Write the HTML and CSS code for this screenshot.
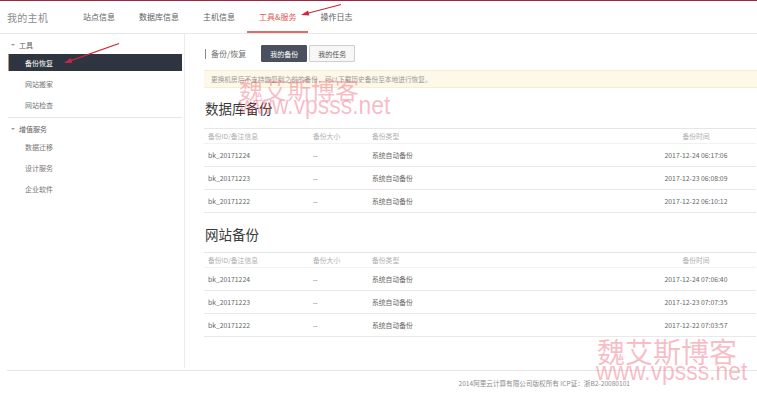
FILE: index.html
```html
<!DOCTYPE html>
<html lang="zh-CN">
<head>
  <meta charset="UTF-8" />
  <meta name="viewport" content="width=device-width, initial-scale=1.0" />
  <title>我的主机 - 备份恢复</title>
  <link rel="stylesheet" href="styles.css">
</head>
<body>
  <div class="topbar">
    <div class="brand">我的主机</div>
    <nav class="nav">
      <a class="nav-item">站点信息</a>
      <a class="nav-item">数据库信息</a>
      <a class="nav-item">主机信息</a>
      <a class="nav-item active">工具&amp;服务</a>
      <a class="nav-item">操作日志</a>
    </nav>
  </div>

  <div class="page">
    <aside class="sidebar">
      <div class="group-title"><span class="caret"></span>工具</div>
      <a class="side-item active">备份恢复</a>
      <a class="side-item">网站搬家</a>
      <a class="side-item">网站检查</a>
      <div class="side-sep"></div>
      <div class="group-title"><span class="caret"></span>增值服务</div>
      <a class="side-item">数据迁移</a>
      <a class="side-item">设计服务</a>
      <a class="side-item">企业软件</a>
    </aside>

    <main class="content">
      <div class="title-row">
        <span class="title-bar"></span>
        <span class="title">备份/恢复</span>
        <button class="tab tab-on">我的备份</button>
        <button class="tab">我的任务</button>
      </div>

      <div class="notice">更换机房后不支持恢复到之前的备份，可以下载历史备份至本地进行恢复。</div>

      <h2 class="section-title">数据库备份</h2>
      <table class="backup-table">
        <thead>
          <tr><th>备份ID/备注信息</th><th>备份大小</th><th>备份类型</th><th class="col-time">备份时间</th></tr>
        </thead>
        <tbody>
          <tr><td>bk_20171224</td><td>--</td><td>系统自动备份</td><td class="col-time">2017-12-24 06:17:06</td></tr>
          <tr><td>bk_20171223</td><td>--</td><td>系统自动备份</td><td class="col-time">2017-12-23 06:08:09</td></tr>
          <tr><td>bk_20171222</td><td>--</td><td>系统自动备份</td><td class="col-time">2017-12-22 06:10:12</td></tr>
        </tbody>
      </table>

      <h2 class="section-title second">网站备份</h2>
      <table class="backup-table">
        <thead>
          <tr><th>备份ID/备注信息</th><th>备份大小</th><th>备份类型</th><th class="col-time">备份时间</th></tr>
        </thead>
        <tbody>
          <tr><td>bk_20171224</td><td>--</td><td>系统自动备份</td><td class="col-time">2017-12-24 07:06:40</td></tr>
          <tr><td>bk_20171223</td><td>--</td><td>系统自动备份</td><td class="col-time">2017-12-23 07:07:35</td></tr>
          <tr><td>bk_20171222</td><td>--</td><td>系统自动备份</td><td class="col-time">2017-12-22 07:03:57</td></tr>
        </tbody>
      </table>
    </main>
  </div>

  <footer class="footer">2014阿里云计算有限公司版权所有 ICP证：浙B2-20080101</footer>

  <!-- red arrows drawn over the screenshot -->
  <svg class="arrows" width="757" height="393" viewBox="0 0 757 393">
    <line x1="341" y1="4.5" x2="305" y2="14" stroke="#c9283e" stroke-width="1.2" />
    <polygon points="301,15 309.3,15.4 308.1,10.6" fill="#c9283e" />
    <line x1="119" y1="43.5" x2="68" y2="61.6" stroke="#c9283e" stroke-width="1.3" />
    <polygon points="64,63 72.4,62.7 70.7,58" fill="#c9283e" />
  </svg>

  <div class="wm wm-cn wm-top-cn">魏艾斯博客</div>
  <div class="wm wm-en wm-top-en">www.vpsss.net</div>
  <div class="wm wm-cn wm-bot-cn">魏艾斯博客</div>
  <div class="wm wm-en wm-bot-en">www.vpsss.net</div>
</body>
</html>
```

FILE: styles.css
```css
body {
  margin: 0;
  width: 757px;
  height: 393px;
  overflow: hidden;
  position: relative;
  font-family: 'Noto Sans CJK SC', 'Noto Sans', sans-serif;
  background: #fff;
  color: #666;
}

.topbar {
  display: flex;
  align-items: center;
  height: 32px;
  border-top: 1px solid #a3243f;
  border-bottom: 1px solid #e8e8e8;
}

.brand {
  font-size: 10px;
  color: #8c8c8c;
  padding-left: 7px;
  width: 64px;
  letter-spacing: 0.3px;
}

.nav {
  display: flex;
  height: 32px;
}

.nav-item {
  display: flex;
  align-items: center;
  padding: 0 12px;
  font-size: 8px;
  color: #606060;
  border-bottom: 2px solid transparent;
  box-sizing: border-box;
}

.nav-item.active {
  color: #e05a55;
  border-bottom-color: #e46a64;
}

.page {
  display: flex;
  height: 336px;
}

.sidebar {
  width: 185px;
  box-sizing: border-box;
  padding: 2px 2px 0 8px;
  border-right: 1px solid #ececec;
  height: 334px;
}

.group-title {
  display: flex;
  align-items: center;
  height: 18px;
  font-size: 7px;
  color: #606060;
  padding-left: 3px;
}

.caret {
  width: 0;
  height: 0;
  border-left: 2px solid transparent;
  border-right: 2px solid transparent;
  border-top: 2.5px solid #999;
  margin-right: 4px;
}

.side-item {
  display: flex;
  align-items: center;
  height: 17px;
  margin-bottom: 4px;
  padding-left: 17px;
  font-size: 7px;
  color: #777;
}

.side-item.active {
  background: #2f3540;
  color: #fff;
  border-left: 1px solid #b99a6a;
  padding-left: 16px;
}

.side-sep {
  height: 1px;
  background: #e6e6e6;
  margin-bottom: 2px;
}

.content {
  flex: 1;
  padding-left: 19px;
}

.title-row {
  display: flex;
  align-items: center;
  margin-top: 11px;
  height: 17px;
}

.title-bar {
  width: 1px;
  height: 10px;
  background: #888;
  margin-left: 1px;
  margin-right: 5px;
}

.title {
  font-size: 8px;
  color: #707070;
  margin-right: 15px;
}

.tab {
  width: 46px;
  height: 17px;
  padding: 0;
  font-family: inherit;
  font-size: 7px;
  color: #555;
  background: #f7f7f7;
  border: 1px solid #cfcfcf;
  border-radius: 1px;
  margin-right: 2px;
}

.tab-on {
  background: #4a505d;
  border-color: #4a505d;
  color: #fff;
}

.notice {
  margin-top: 8px;
  height: 18px;
  box-sizing: border-box;
  display: flex;
  align-items: center;
  padding-left: 7px;
  font-size: 6.7px;
  color: #999;
  background: #fdf8e7;
  border-top: 1px solid #f6edd2;
  border-bottom: 1px solid #f6edd2;
}

.section-title {
  font-size: 13.5px;
  font-weight: normal;
  color: #3a3a3a;
  margin: 10px 0 10px 1px;
  height: 20px;
  line-height: 20px;
}

.section-title.second {
  margin-top: 11px;
  margin-bottom: 8px;
}

.backup-table {
  width: 552px;
  border-collapse: collapse;
  table-layout: fixed;
  font-size: 6.8px;
}

.backup-table th,
.backup-table td {
  padding: 0 0 0 4px;
  text-align: left;
  font-weight: normal;
}

.backup-table th:nth-child(1) { width: 101px; }
.backup-table th:nth-child(2) { width: 55px; }
.backup-table th:nth-child(3) { width: 262px; }

.backup-table thead tr {
  height: 15px;
  border-top: 1px solid #e6e6e6;
  border-bottom: 1px solid #f2f2f2;
}

.backup-table th {
  color: #b0b0b0;
}

.backup-table tbody tr {
  height: 23px;
  border-bottom: 1px solid #e9e9e9;
}

.backup-table td {
  color: #666;
}

.backup-table .col-time {
  text-align: center;
  padding: 0 0 0 2px;
}

.footer {
  margin-left: 7px;
  border-top: 1px solid #e6e6e6;
  height: 22px;
  box-sizing: border-box;
  padding: 7px 127px 0 0;
  text-align: right;
  font-size: 6.6px;
  color: #8c8c8c;
}

.arrows {
  position: absolute;
  left: 0;
  top: 0;
  pointer-events: none;
}

.wm {
  position: absolute;
  line-height: 1;
  color: rgba(236, 80, 105, 0.38);
  white-space: nowrap;
  pointer-events: none;
}

.wm-cn {
  font-family: 'Noto Sans CJK SC', sans-serif;
}

.wm-en {
  font-family: 'Liberation Sans', sans-serif;
  transform-origin: left top;
  transform: scaleX(0.88);
}

.wm-top-cn { left: 239px; top: 77px; font-size: 24px; }
.wm-top-en { left: 239px; top: 92px; font-size: 26px; }
.wm-bot-cn { left: 597px; top: 337px; font-size: 28px; }
.wm-bot-en { left: 596px; top: 358px; font-size: 26px; }
```
